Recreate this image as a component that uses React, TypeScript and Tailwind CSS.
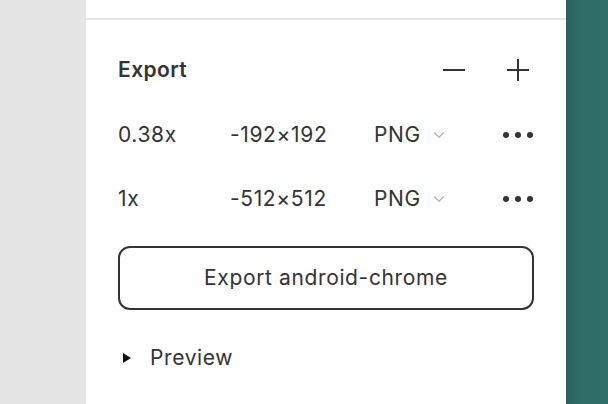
import { ChevronDown } from 'lucide-react'

function Row({ scale, size }: { scale: string; size: string }) {
  return (
    <div className="flex h-16 items-center">
      <span className="w-[112px]">{scale}</span>
      <span className="w-[144px]">{size}</span>
      <span className="flex items-center gap-[9px]">
        PNG
        <ChevronDown size={18} strokeWidth={1.5} className="text-[#b0b0b0]" />
      </span>
      <span className="ml-auto flex gap-[6px] pr-[1px]">
        <i className="block h-[6px] w-[6px] rounded-full bg-[#333]" />
        <i className="block h-[6px] w-[6px] rounded-full bg-[#333]" />
        <i className="block h-[6px] w-[6px] rounded-full bg-[#333]" />
      </span>
    </div>
  )
}

export default function App() {
  return (
    <div className="flex h-[404px] w-[608px] overflow-hidden bg-[#e5e5e5] font-['Inter',sans-serif] text-[21px] tracking-[0.03em] text-[#333]">
      <div className="w-[86px] shrink-0" />
      <div className="flex w-[480px] shrink-0 flex-col bg-white">
        <div className="h-[20px] shrink-0 border-b-2 border-[#e5e5e5]" />
        <div className="flex flex-col px-8 pt-[26px]">
          {/* header */}
          <div className="flex h-12 items-center">
            <span className="font-semibold tracking-[0.02em]">Export</span>
            <div className="ml-auto flex items-center gap-[40px] pr-[4px]">
              <svg width="24" height="24" viewBox="0 0 24 24">
                <path d="M1 12h22" stroke="#333" strokeWidth="2" />
              </svg>
              <svg width="24" height="24" viewBox="0 0 24 24">
                <path d="M1 12h22M12 1v22" stroke="#333" strokeWidth="2" />
              </svg>
            </div>
          </div>
          <div className="mt-[9px]">
            <Row scale="0.38x" size="-192×192" />
            <Row scale="1x" size="-512×512" />
          </div>
          <button className="mt-[15px] h-[64px] w-full rounded-xl border-2 border-[#333]">
            Export android-chrome
          </button>
          <div className="mt-[24px] flex h-12 items-center">
            <svg width="10" height="12" viewBox="0 0 10 12" className="ml-[4px]">
              <path d="M1 1l8 5-8 5z" fill="#111" />
            </svg>
            <span className="ml-[18px]">Preview</span>
          </div>
        </div>
      </div>
      <div className="flex-1 bg-gradient-to-r from-[#29605a] via-[#2f6d66] via-30% to-[#30706a]" />
    </div>
  )
}
